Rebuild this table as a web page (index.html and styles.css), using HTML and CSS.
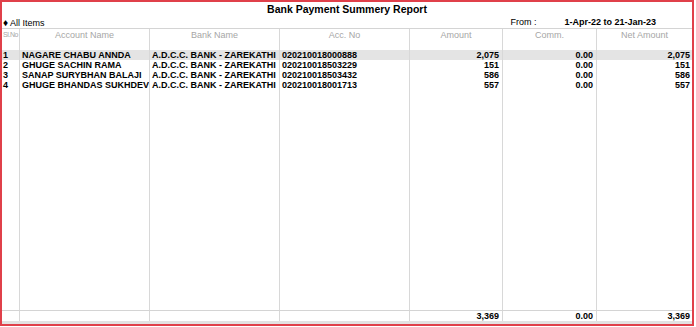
FILE: index.html
```html
<!DOCTYPE html>
<html>
<head>
<meta charset="utf-8">
<link rel="stylesheet" href="styles.css">
</head>
<body>
<div class="frame">
  <div class="title">Bank Payment Summery Report</div>
  <div class="sub">
    <span class="all"><span class="dia">♦</span> All Items</span>
    <span class="from">From :</span>
    <span class="range">1-Apr-22 to 21-Jan-23</span>
  </div>
  <div class="table">
    <div class="row head">
      <div class="c sl">Sl.No</div>
      <div class="c">Account Name</div>
      <div class="c">Bank Name</div>
      <div class="c">Acc. No</div>
      <div class="c">Amount</div>
      <div class="c">Comm.</div>
      <div class="c">Net Amount</div>
    </div>
    <div class="row blank">
      <div class="c"></div><div class="c"></div><div class="c"></div><div class="c"></div><div class="c"></div><div class="c"></div><div class="c"></div>
    </div>
    <div class="row data sel">
      <div class="c">1</div>
      <div class="c">NAGARE CHABU ANNDA</div>
      <div class="c">A.D.C.C. BANK - ZAREKATHI</div>
      <div class="c">020210018000888</div>
      <div class="c num">2,075</div>
      <div class="c num">0.00</div>
      <div class="c num">2,075</div>
    </div>
    <div class="row data">
      <div class="c">2</div>
      <div class="c">GHUGE SACHIN RAMA</div>
      <div class="c">A.D.C.C. BANK - ZAREKATHI</div>
      <div class="c">020210018503229</div>
      <div class="c num">151</div>
      <div class="c num">0.00</div>
      <div class="c num">151</div>
    </div>
    <div class="row data">
      <div class="c">3</div>
      <div class="c">SANAP SURYBHAN BALAJI</div>
      <div class="c">A.D.C.C. BANK - ZAREKATHI</div>
      <div class="c">020210018503432</div>
      <div class="c num">586</div>
      <div class="c num">0.00</div>
      <div class="c num">586</div>
    </div>
    <div class="row data">
      <div class="c">4</div>
      <div class="c">GHUGE BHANDAS SUKHDEV</div>
      <div class="c">A.D.C.C. BANK - ZAREKATHI</div>
      <div class="c">020210018001713</div>
      <div class="c num">557</div>
      <div class="c num">0.00</div>
      <div class="c num">557</div>
    </div>
    <div class="row filler">
      <div class="c"></div><div class="c"></div><div class="c"></div><div class="c"></div><div class="c"></div><div class="c"></div><div class="c"></div>
    </div>
    <div class="row data total">
      <div class="c"></div>
      <div class="c"></div>
      <div class="c"></div>
      <div class="c"></div>
      <div class="c num">3,369</div>
      <div class="c num">0.00</div>
      <div class="c num">3,369</div>
    </div>
  </div>
  <div class="band"></div>
</div>
</body>
</html>
```

FILE: styles.css
```css
html, body {
  margin: 0;
  padding: 0;
  background: #ffffff;
}

body {
  font-family: "Liberation Sans", Arial, sans-serif;
  color: #000;
}

.frame {
  box-sizing: border-box;
  width: 694px;
  height: 326px;
  border: 2px solid #e0404a;
  background: #fff;
  display: flex;
  flex-direction: column;
}

.title {
  height: 14px;
  line-height: 15px;
  font-size: 10.5px;
  font-weight: bold;
  text-align: center;
}

.sub {
  height: 12px;
  line-height: 13px;
  font-size: 9px;
  display: flex;
  padding-left: 1px;
}

.dia {
  font-size: 10px;
}

.from {
  margin-left: auto;
  width: 54px;
}

.range {
  font-weight: bold;
  margin-right: 36px;
}

.table {
  flex: 1;
  display: flex;
  flex-direction: column;
  border-top: 1px solid #d4d4d4;
}

.row {
  display: grid;
  grid-template-columns: 18px 130px 130px 130px 93px 94px 95px;
}

.c {
  box-sizing: border-box;
  border-right: 1px solid #d8d8d8;
  padding: 0 2px 0 2px;
  white-space: nowrap;
  overflow: hidden;
}

.c:last-child {
  border-right: none;
}

.head {
  height: 11px;
  line-height: 12px;
  font-size: 9px;
  color: #a6a6a6;
}

.head .c {
  text-align: center;
  padding: 0;
}

.head .sl {
  font-size: 7px;
  letter-spacing: -0.4px;
  text-align: left;
  padding-left: 1px;
}

.blank {
  height: 10px;
}

.data {
  height: 10px;
  line-height: 10px;
  font-size: 9px;
  font-weight: bold;
}

.data .c:first-child {
  padding-left: 1px;
}

.data .num {
  text-align: right;
  padding-right: 3px;
}

.data .c:last-child.num {
  padding-right: 2px;
}

.sel {
  background: #e4e4e4;
}

.filler {
  flex: 1;
}

.total {
  border-top: 1px solid #d4d4d4;
}

.band {
  height: 3px;
  background: #e2e2e2;
}
```
